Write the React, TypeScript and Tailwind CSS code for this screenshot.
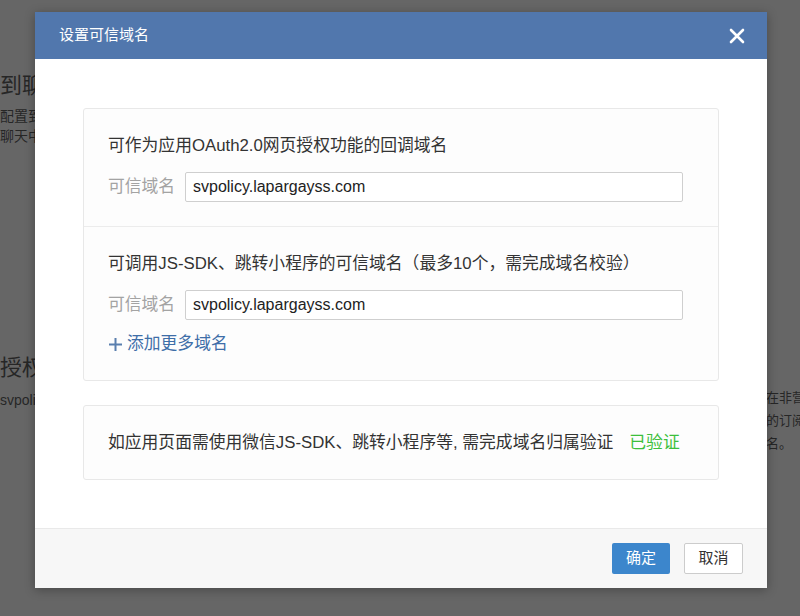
const font = {
  fontFamily: '"Liberation Sans", "Noto Sans CJK SC", sans-serif',
};

function Backdrop() {
  return (
    <div className="flex h-full w-full justify-between text-[#262626]">
      <div className="flex w-[40px] flex-col overflow-hidden whitespace-nowrap">
        <div className="mt-[72px] text-[22px] leading-[28px]">到聊天</div>
        <div className="mt-[6px] text-[14px] leading-[20px]">配置到</div>
        <div className="text-[14px] leading-[20px]">聊天中</div>
        <div className="mt-[208px] text-[22px] leading-[28px]">授权方</div>
        <div className="mt-[8px] text-[14px] leading-[20px]">svpolicy</div>
      </div>
      <div className="flex w-[34px] flex-col overflow-hidden whitespace-nowrap text-[13px] leading-[23px]">
        <div className="mt-[386px]">在非营</div>
        <div>的订阅</div>
        <div>名。</div>
      </div>
    </div>
  );
}

function DomainInput({ value }: { value: string }) {
  return (
    <div className="flex items-center">
      <span className="w-[77px] text-[16.8px] text-[#a3a3a3]">可信域名</span>
      <div className="flex h-[30px] w-[498px] items-center rounded-[2px] border border-[#cfcfcf] bg-white px-[7px] text-[16px] text-[#222]">
        {value}
      </div>
    </div>
  );
}

export default function App() {
  return (
    <div
      className="relative h-[616px] w-[800px] overflow-hidden bg-[#666666]"
      style={font}
    >
      <Backdrop />
      <div className="absolute left-[35px] top-[12px] flex w-[732px] flex-col bg-white shadow-[0_2px_10px_rgba(0,0,0,0.3)]">
        <div className="flex h-[47px] items-center justify-between bg-[#5177ad] pl-[24px] pr-[22px]">
          <span className="text-[15px] text-white">设置可信域名</span>
          <svg width="16" height="16" viewBox="0 0 16 16">
            <path
              d="M2 2 L14 14 M14 2 L2 14"
              stroke="#ffffff"
              strokeWidth="2.6"
              strokeLinecap="round"
            />
          </svg>
        </div>

        <div className="flex flex-col gap-[24px] px-[48px] pb-[48px] pt-[49px]">
          <div className="rounded-[3px] border border-[#e8e8e8] bg-[#fdfdfd]">
            <div className="flex flex-col gap-[14px] px-[24px] pb-[24px] pt-[25px]">
              <div className="text-[16.8px] leading-[24px] text-[#333]">
                可作为应用OAuth2.0网页授权功能的回调域名
              </div>
              <DomainInput value="svpolicy.lapargayss.com" />
            </div>
            <div className="flex flex-col px-[24px] pb-[21px] pt-[25px] border-t border-[#ececec]">
              <div className="text-[16.8px] leading-[24px] text-[#333]">
                可调用JS-SDK、跳转小程序的可信域名（最多10个，需完成域名校验）
              </div>
              <div className="mt-[14px]">
                <DomainInput value="svpolicy.lapargayss.com" />
              </div>
              <div className="mt-[9px] flex items-center gap-[4px] text-[16.8px] leading-[30px] text-[#3e6ea8]">
                <svg width="15" height="15" viewBox="0 0 15 15">
                  <path d="M7.5 1 V14 M1 7.5 H14" stroke="#5a7fae" strokeWidth="2" />
                </svg>
                <span>添加更多域名</span>
              </div>
            </div>
          </div>

          <div className="flex h-[75px] items-center rounded-[3px] border border-[#e8e8e8] bg-[#fdfdfd] px-[24px] text-[16.8px] text-[#333]">
            <span>如应用页面需使用微信JS-SDK、跳转小程序等, 需完成域名归属验证</span>
            <span className="ml-[16px] text-[#3cbf3c]">已验证</span>
          </div>
        </div>

        <div className="flex h-[60px] items-center justify-end gap-[14px] border-t border-[#e9e9e9] bg-[#f7f7f7] pr-[24px]">
          <button className="h-[31px] w-[58px] rounded-[2px] bg-[#3c86cc] text-[15px] text-white">
            确定
          </button>
          <button className="h-[31px] w-[59px] rounded-[2px] border border-[#cccccc] bg-white text-[15px] text-[#333]">
            取消
          </button>
        </div>
      </div>
    </div>
  );
}
